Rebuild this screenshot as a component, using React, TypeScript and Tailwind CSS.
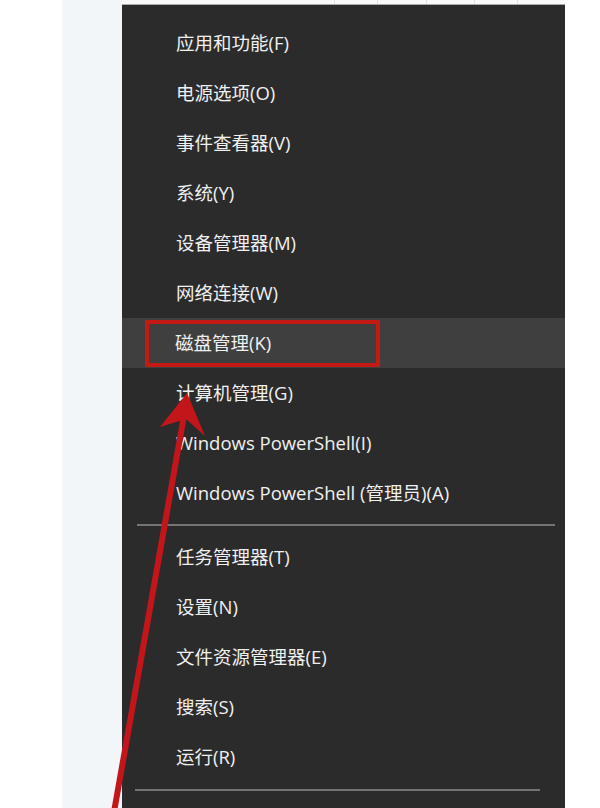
const groupA = [
  "应用和功能(F)",
  "电源选项(O)",
  "事件查看器(V)",
  "系统(Y)",
  "设备管理器(M)",
  "网络连接(W)",
  "磁盘管理(K)",
  "计算机管理(G)",
  "Windows PowerShell(I)",
  "Windows PowerShell (管理员)(A)",
];

const groupB = ["任务管理器(T)", "设置(N)", "文件资源管理器(E)", "搜索(S)", "运行(R)"];

function MenuRow({ label }: { label: string }) {
  const active = label === "磁盘管理(K)";
  return (
    <div className={`h-[50px] flex items-center ${active ? "bg-[#3f3f3f]" : ""}`}>
      {active ? (
        <div className="ml-[23px] h-[47px] w-[235px] border-[4px] border-[#c41a16] flex items-center pl-[26px]">
          <span className="text-[18.5px] text-[#f0f0f0]">{label}</span>
        </div>
      ) : (
        <span className="pl-[54px] text-[18.5px] text-[#f0f0f0]">{label}</span>
      )}
    </div>
  );
}

export default function App() {
  return (
    <div
      className="relative w-[600px] h-[808px] overflow-hidden bg-white flex"
      style={{ fontFamily: '"Open Sans", "Noto Sans CJK SC", sans-serif' }}
    >
      <div className="w-[62px] shrink-0 bg-white" />
      <div className="w-[60px] shrink-0 bg-[#f3f6f9]" />
      <div className="w-[443px] shrink-0 flex flex-col">
        <div className="h-[5px] flex bg-[#fafafa] border-b border-[#a9a9a9]">
          <div className="w-[213px] border-r border-[#e2e2e2]" />
          <div className="w-[43px] border-r border-[#e2e2e2]" />
          <div className="w-[49px] border-r border-[#e2e2e2]" />
          <div className="w-[48px] border-r border-[#e2e2e2]" />
          <div className="w-[43px] border-r border-[#e2e2e2]" />
          <div className="flex-1" />
        </div>
        <div className="flex-1 bg-[#2b2b2b] pt-[13px]">
          {groupA.map((l) => (
            <MenuRow key={l} label={l} />
          ))}
          <div className="h-[14px] flex items-center pl-[15px] pr-[10px]">
            <div className="h-[2px] w-full bg-[#747474]" />
          </div>
          {groupB.map((l) => (
            <MenuRow key={l} label={l} />
          ))}
          <div className="h-[16px] flex items-center pl-[13px] pr-[25px]">
            <div className="h-[2px] w-full bg-[#747474]" />
          </div>
        </div>
      </div>
      <div className="flex-1 bg-white" />

      <svg className="absolute inset-0 pointer-events-none" width="600" height="808" viewBox="0 0 600 808">
        <line x1="114" y1="812" x2="185" y2="410" stroke="#c3161b" strokeWidth="6" />
        <polygon points="187,393 205,436 186,419 160,427" fill="#c3161b" />
      </svg>
    </div>
  );
}
